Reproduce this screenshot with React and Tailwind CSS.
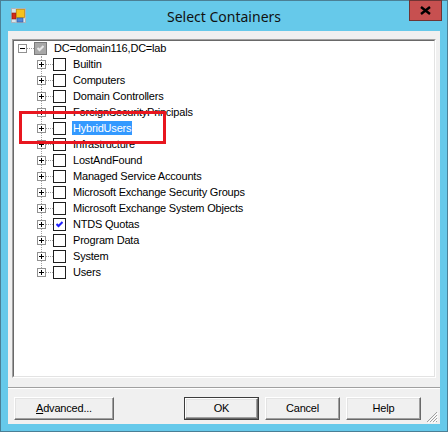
import React from "react";

const children = [
  { label: "Builtin" },
  { label: "Computers" },
  { label: "Domain Controllers" },
  { label: "ForeignSecurityPrincipals" },
  { label: "HybridUsers", selected: true },
  { label: "Infrastructure" },
  { label: "LostAndFound" },
  { label: "Managed Service Accounts" },
  { label: "Microsoft Exchange Security Groups" },
  { label: "Microsoft Exchange System Objects" },
  { label: "NTDS Quotas", checked: true },
  { label: "Program Data" },
  { label: "System" },
  { label: "Users" },
];

function ExpandBox({ minus }) {
  return (
    <div className="relative w-[9px] h-[9px] border border-[#919191] bg-white shrink-0">
      <div className="absolute left-[1px] top-[3px] w-[5px] h-px bg-black" />
      {!minus && <div className="absolute left-[3px] top-[1px] w-px h-[5px] bg-black" />}
    </div>
  );
}

function CheckBox({ state }) {
  if (state === "gray") {
    return (
      <div className="w-[13px] h-[13px] border border-[#7a7a7a] bg-[#a8a8a8] flex items-center justify-center shrink-0">
        <svg width="7" height="7" viewBox="0 0 7 7">
          <polyline points="0.5,3 2.5,5 6.5,1" fill="none" stroke="#e8e8e8" strokeWidth="2" />
        </svg>
      </div>
    );
  }
  return (
    <div className="w-[13px] h-[13px] border border-[#1e1e1e] bg-white flex items-center justify-center shrink-0">
      {state === "on" && (
        <svg width="7" height="7" viewBox="0 0 7 7">
          <polyline points="0.5,3 2.5,5 6.5,1" fill="none" stroke="#1f1fff" strokeWidth="2" />
        </svg>
      )}
    </div>
  );
}

function Connector() {
  return <div className="w-[7px] h-0 border-t border-dotted border-[#a0a0a0] shrink-0" />;
}

function WinButton({ children, primary, className }) {
  return (
    <div className={`h-[23px] ${primary ? "border border-[#3c3c3c]" : ""} ${className}`}>
      <div className="h-full w-full flex items-center justify-center bg-[#f0f0f0] border-t border-l border-white border-b border-r border-b-[#696969] border-r-[#696969] shadow-[inset_-1px_-1px_#a0a0a0,inset_1px_1px_#e3e3e3] text-[11px] tracking-[-0.2px] text-black">
        {children}
      </div>
    </div>
  );
}

export default function App() {
  return (
    <div
      className="w-[448px] h-[432px] bg-[#66c9ea] border border-[#4b7f95] flex flex-col"
      style={{ fontFamily: '"Liberation Sans", Arial, sans-serif' }}
    >
      {/* title bar */}
      <div className="relative h-[30px] flex items-center justify-center shrink-0">
        <svg className="absolute left-[10px] top-[7px]" width="15" height="15" viewBox="0 0 15 15">
          <rect x="0.5" y="0.5" width="14" height="14" fill="#d8e4ec" stroke="#a9b4bc" />
          <line x1="5" y1="0" x2="5" y2="15" stroke="#b9c4cc" />
          <line x1="0" y1="10" x2="15" y2="10" stroke="#b9c4cc" />
          <rect x="1" y="5" width="4" height="6" fill="#d42a1a" stroke="#8a1a10" strokeWidth="0.6" />
          <rect x="5.5" y="1.5" width="8" height="8" fill="#f7c21c" stroke="#c98d0a" strokeWidth="0.8" />
          <rect x="6" y="10" width="6" height="4" fill="#4f86d9" stroke="#2a56a0" strokeWidth="0.6" />
        </svg>
        <span
          className="text-[14px] text-[#111] mt-[1px]"
          style={{ fontFamily: '"Noto Sans", "Open Sans", sans-serif' }}
        >
          Select Containers
        </span>
        <div className="absolute right-[5px] top-[-1px] w-[33px] h-[21px] bg-[#c75050] border border-[#6e3434] flex items-center justify-center">
          <svg width="11" height="9" viewBox="0 0 11 9">
            <path d="M1 1 L10 8 M10 1 L1 8" stroke="#000" strokeWidth="2.4" />
          </svg>
        </div>
      </div>

      {/* client area */}
      <div className="relative flex-1 mx-[7px] mb-[7px] bg-[#f0f0f0] flex flex-col">
        {/* tree view */}
        <div className="mt-[8px] ml-[4px] w-[424px] h-[339px] border-t border-l border-[#a0a0a0] border-b-white border-r-white border-b border-r">
          <div className="relative w-full h-full bg-white border-t border-l border-[#696969] border-b border-r border-b-[#e3e3e3] border-r-[#e3e3e3] text-[11px] tracking-[-0.2px] text-black overflow-hidden">
            <div className="flex items-center h-[16px] pl-[4px] mt-[-1px]">
              <ExpandBox minus />
              <Connector />
              <CheckBox state="gray" />
              <span className="ml-[6px] px-[1px] leading-[14px]">DC=domain116,DC=lab</span>
            </div>
            <div className="relative">
              <div className="absolute left-[27px] top-0 h-[216px] border-l border-dotted border-[#a0a0a0]" />
              {children.map((c) => (
                <div key={c.label} className="relative flex items-center h-[16px] pl-[23px]">
                  <ExpandBox />
                  <Connector />
                  <CheckBox state={c.checked ? "on" : "off"} />
                  <span
                    className={`ml-[6px] px-[1px] leading-[14px] whitespace-nowrap ${
                      c.selected ? "bg-[#3399ff] text-white" : ""
                    }`}
                  >
                    {c.label}
                  </span>
                </div>
              ))}
            </div>
            {/* red annotation box */}
            <div className="absolute left-[5px] top-[70px] w-[147px] h-[33px] border-[3px] border-[#e8161f]" />
          </div>
        </div>

        {/* separator */}
        <div className="mt-[9px] h-px bg-[#a0a0a0]" />
        <div className="h-px bg-white" />

        {/* buttons */}
        <div className="mt-[8px] flex items-center pl-[6px] pr-[19px]">
          <WinButton className="w-[100px]">
            <span>
              <span className="underline">A</span>dvanced...
            </span>
          </WinButton>
          <div className="flex-1" />
          <div className="flex gap-[6px]">
            <WinButton primary className="w-[75px]">OK</WinButton>
            <WinButton className="w-[75px]">Cancel</WinButton>
            <WinButton className="w-[75px]">Help</WinButton>
          </div>
        </div>

        {/* size grip */}
        <svg className="absolute right-[2px] bottom-[1px]" width="12" height="12" viewBox="0 0 12 12">
          <path d="M11 1 L1 11 M11 4 L4 11 M11 7 L7 11 M11 10 L10 11" stroke="#a0a0a0" strokeWidth="1" />
          <path d="M12 2 L2 12 M12 5 L5 12 M12 8 L8 12" stroke="#ffffff" strokeWidth="1" />
        </svg>
      </div>
    </div>
  );
}
